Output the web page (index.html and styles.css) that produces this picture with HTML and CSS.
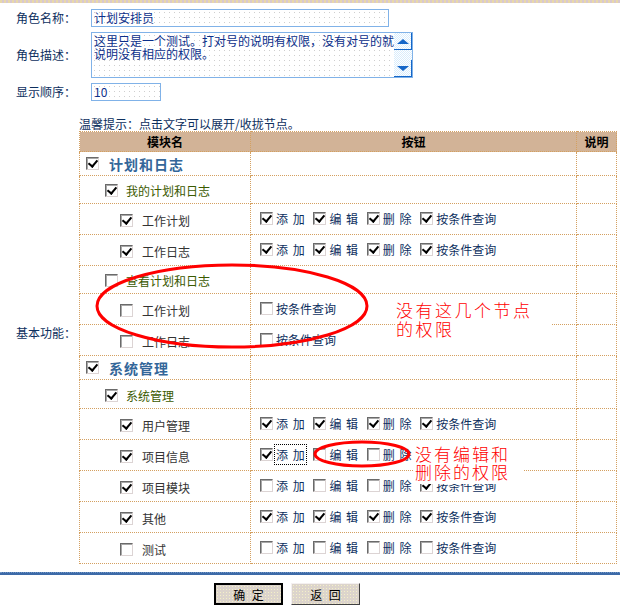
FILE: index.html
```html
<!DOCTYPE html>
<html lang="zh-CN">
  <head>
    <meta charset="UTF-8" />
    <title>角色权限设置</title>
    <link rel="stylesheet" href="styles.css">
  </head>
  <body>
    <div class="page">
      <div class="top-band"></div>

      <div class="form">
        <div class="label">角色名称：</div>
        <div class="field"><div class="input name">计划安排员</div></div>

        <div class="label">角色描述：</div>
        <div class="field">
          <div class="textarea">
            <div class="ta-text">这里只是一个测试。打对号的说明有权限，没有对号的就<br>说明没有相应的权限。</div>
            <div class="scrollbar">
              <span class="sb-btn"><i class="arrow up"></i></span>
              <span class="sb-track"></span>
              <span class="sb-btn"><i class="arrow down"></i></span>
            </div>
          </div>
        </div>

        <div class="label">显示顺序：</div>
        <div class="field"><div class="input order">10</div></div>

        <div class="label label-perm">基本功能：</div>
        <div class="perm">
          <div class="hint">温馨提示：点击文字可以展开/收拢节点。</div>
          <table class="tree">
            <tr class="head">
              <th class="c1">模块名</th>
              <th class="c2">按钮</th>
              <th class="c3">说明</th>
            </tr>

            <tr class="lv1">
              <td><span class="cb on"></span><span class="t1">计划和日志</span></td>
              <td></td><td></td>
            </tr>
            <tr class="lv2">
              <td><span class="cb on"></span><span class="t2">我的计划和日志</span></td>
              <td></td><td></td>
            </tr>
            <tr class="lv3">
              <td><span class="cb on"></span><span class="t3">工作计划</span></td>
              <td>
                <span class="opt"><span class="cb on"></span>添 加</span>
                <span class="opt"><span class="cb on"></span>编 辑</span>
                <span class="opt"><span class="cb on"></span>删 除</span>
                <span class="opt"><span class="cb on"></span>按条件查询</span>
              </td>
              <td></td>
            </tr>
            <tr class="lv3">
              <td><span class="cb on"></span><span class="t3">工作日志</span></td>
              <td>
                <span class="opt"><span class="cb on"></span>添 加</span>
                <span class="opt"><span class="cb on"></span>编 辑</span>
                <span class="opt"><span class="cb on"></span>删 除</span>
                <span class="opt"><span class="cb on"></span>按条件查询</span>
              </td>
              <td></td>
            </tr>
            <tr class="lv2">
              <td><span class="cb"></span><span class="t2">查看计划和日志</span></td>
              <td></td><td></td>
            </tr>
            <tr class="lv3">
              <td><span class="cb"></span><span class="t3">工作计划</span></td>
              <td><span class="opt"><span class="cb"></span>按条件查询</span></td>
              <td></td>
            </tr>
            <tr class="lv3">
              <td><span class="cb"></span><span class="t3">工作日志</span></td>
              <td><span class="opt"><span class="cb"></span>按条件查询</span></td>
              <td></td>
            </tr>

            <tr class="lv1">
              <td><span class="cb on"></span><span class="t1">系统管理</span></td>
              <td></td><td></td>
            </tr>
            <tr class="lv2 tall">
              <td><span class="cb on"></span><span class="t2">系统管理</span></td>
              <td></td><td></td>
            </tr>
            <tr class="lv3">
              <td><span class="cb on"></span><span class="t3">用户管理</span></td>
              <td>
                <span class="opt"><span class="cb on"></span>添 加</span>
                <span class="opt"><span class="cb on"></span>编 辑</span>
                <span class="opt"><span class="cb on"></span>删 除</span>
                <span class="opt"><span class="cb on"></span>按条件查询</span>
              </td>
              <td></td>
            </tr>
            <tr class="lv3">
              <td><span class="cb on"></span><span class="t3">项目信息</span></td>
              <td>
                <span class="opt"><span class="cb on"></span><span class="focus">添 加</span></span>
                <span class="opt"><span class="cb"></span>编 辑</span>
                <span class="opt"><span class="cb"></span>删 除</span>
                <span class="opt covered"><span class="cb on"></span>按条件查询</span>
              </td>
              <td></td>
            </tr>
            <tr class="lv3">
              <td><span class="cb on"></span><span class="t3">项目模块</span></td>
              <td>
                <span class="opt"><span class="cb"></span>添 加</span>
                <span class="opt"><span class="cb"></span>编 辑</span>
                <span class="opt"><span class="cb"></span>删 除</span>
                <span class="opt"><span class="cb on"></span>按条件查询</span>
              </td>
              <td></td>
            </tr>
            <tr class="lv3">
              <td><span class="cb on"></span><span class="t3">其他</span></td>
              <td>
                <span class="opt"><span class="cb on"></span>添 加</span>
                <span class="opt"><span class="cb on"></span>编 辑</span>
                <span class="opt"><span class="cb on"></span>删 除</span>
                <span class="opt"><span class="cb on"></span>按条件查询</span>
              </td>
              <td></td>
            </tr>
            <tr class="lv3">
              <td><span class="cb"></span><span class="t3">测试</span></td>
              <td>
                <span class="opt"><span class="cb"></span>添 加</span>
                <span class="opt"><span class="cb"></span>编 辑</span>
                <span class="opt"><span class="cb"></span>删 除</span>
                <span class="opt"><span class="cb"></span>按条件查询</span>
              </td>
              <td></td>
            </tr>
          </table>
        </div>
      </div>

      <div class="bottom-line"></div>
      <div class="buttons">
        <button class="btn default">确 定</button>
        <button class="btn">返 回</button>
      </div>

      <!-- red notes drawn over the screenshot -->
      <svg class="marks" width="620" height="612" viewBox="0 0 620 612">
        <ellipse cx="232" cy="306" rx="135" ry="41" fill="none" stroke="#f00" stroke-width="3" />
        <ellipse cx="362" cy="454" rx="47" ry="12" fill="none" stroke="#f00" stroke-width="3" />
      </svg>
      <div class="note note-1">没有这几个节点<br>的权限</div>
      <div class="note note-2">没有编辑和<br>删除的权限</div>
    </div>
  </body>
</html>
```

FILE: styles.css
```css
* {
  margin: 0;
  padding: 0;
  box-sizing: border-box;
}

body {
  background: #fff;
  font-family: "Noto Sans CJK SC", "DejaVu Sans", sans-serif;
  font-size: 12px;
  color: #0d2f5e;
}

.page {
  position: relative;
  width: 620px;
  height: 612px;
  overflow: hidden;
}

.top-band {
  height: 3px;
  background: repeating-linear-gradient(90deg, #e8d8a8 0 2px, #d8c8d0 2px 4px);
}

.form {
  display: grid;
  grid-template-columns: 79px 1fr;
  row-gap: 5px;
  padding-top: 6px;
}

.label {
  align-self: center;
  text-align: right;
  padding-right: 3px;
  line-height: 14px;
}

.label-perm {
  padding-bottom: 4px;
}

.field {
  padding-left: 12px;
}

.input,
.textarea {
  border: 1px solid #80b2e8;
  background-color: #fff;
  background-image: radial-gradient(circle, #cfcfcf 0.6px, transparent 0.8px);
  background-size: 5px 5px;
  color: #0b2f8a;
  line-height: 16px;
  padding-left: 2px;
}

.name {
  width: 298px;
  height: 18px;
}

.order {
  width: 70px;
  height: 18px;
}

.textarea {
  display: flex;
  width: 322px;
  height: 46px;
  padding-left: 0;
}

.ta-text {
  flex: 1;
  padding: 1px 0 0 2px;
  line-height: 13px;
  white-space: nowrap;
}

.scrollbar {
  width: 18px;
  display: flex;
  flex-direction: column;
  background: repeating-conic-gradient(#d8ecfc 0 25%, #fff 0 50%) 0 0 / 2px 2px;
}

.sb-btn {
  height: 17px;
  display: flex;
  align-items: center;
  justify-content: center;
  border-right: 1px solid #1466c8;
  border-bottom: 1px solid #1466c8;
}

.sb-track {
  flex: 1;
}

.arrow {
  width: 0;
  height: 0;
  border-left: 6px solid transparent;
  border-right: 6px solid transparent;
}

.arrow.up {
  border-bottom: 5px solid #1466c8;
}

.arrow.down {
  border-top: 5px solid #1466c8;
}

.perm {
  padding-top: 11px;
}

.hint {
  line-height: 14px;
  height: 14px;
  color: #0d2f5e;
}

.tree {
  width: 537px;
  border-collapse: collapse;
  border: 1px dotted #c8a070;
  table-layout: fixed;
}

.tree td,
.tree th {
  border: 1px dotted #d4a060;
  padding: 0;
  white-space: nowrap;
}

.head th {
  height: 20px;
  font-size: 12px;
  font-weight: bold;
  color: #000;
  background: repeating-conic-gradient(#c09a7a 0 25%, #e4ccb4 0 50%) 0 0 / 2px 2px;
}

.c1 { width: 171px; }
.c2 { width: 326px; }
.c3 { width: 40px; }

.lv1 td { height: 24px; }
.lv2 td { height: 28px; }
.lv2.tall td { height: 29px; }
.lv3 td { height: 31px; }

.lv1 td:first-child { padding-left: 6px; }
.lv2 td:first-child { padding-left: 25px; }
.lv3 td:first-child { padding-left: 40px; }

.tree td:nth-child(2) {
  padding-left: 9px;
  color: #0d2f5e;
}

.cb {
  position: relative;
  display: inline-block;
  width: 13px;
  height: 13px;
  border: 1px solid;
  border-color: #6a6a6a #dcd4d4 #dcd4d4 #6a6a6a;
  box-shadow: inset 1px 1px #a8a8a8;
  background: #fff;
  vertical-align: middle;
}

.cb.on::after {
  content: "";
  position: absolute;
  left: 3px;
  top: 0;
  width: 4px;
  height: 7px;
  border: solid #000;
  border-width: 0 2px 2px 0;
  transform: rotate(40deg);
}

.t1 {
  margin-left: 10px;
  font-size: 14px;
  font-weight: bold;
  letter-spacing: 1px;
  color: #336699;
  vertical-align: middle;
}

.t2 {
  margin-left: 8px;
  color: #3b5a00;
  vertical-align: middle;
}

.t3 {
  margin-left: 9px;
  color: #333;
  vertical-align: middle;
}

.opt {
  display: inline-flex;
  align-items: center;
  gap: 3px;
  margin-right: 6px;
  word-spacing: 2px;
}

/* hidden under the red note in the screenshot */
.opt.covered {
  visibility: hidden;
}

.focus {
  outline: 1px dotted #000;
  outline-offset: 1px;
}

.bottom-line {
  margin-top: 8px;
  height: 3px;
  background: #3d6aa8;
  border-top: 1px dotted #6f94c4;
}

.buttons {
  padding: 8px 0 0 214px;
  display: flex;
  gap: 8px;
}

.btn {
  width: 69px;
  height: 22px;
  font-family: "Noto Sans CJK SC", sans-serif;
  font-size: 12px;
  color: #000;
  word-spacing: 4px;
  background-color: #dcd4cc;
  background-image: radial-gradient(circle, #f4f0c8 0.7px, transparent 0.9px);
  background-size: 3px 3px;
  border: 1px solid;
  border-color: #f4f0f0 #404040 #404040 #f4f0f0;
}

.btn.default {
  border: 2px solid #000;
}

.marks {
  position: absolute;
  left: 0;
  top: 0;
  pointer-events: none;
}

.note {
  position: absolute;
  background: #fff;
  color: #f00;
  font-weight: 300;
}

.note-1 {
  left: 396px;
  top: 298px;
  width: 155px;
  height: 42px;
  font-size: 17px;
  line-height: 19px;
  letter-spacing: 2.5px;
  padding-top: 2px;
}

.note-2 {
  left: 414px;
  top: 443px;
  width: 110px;
  height: 41px;
  font-size: 17px;
  line-height: 18px;
  letter-spacing: 2px;
  padding: 2px 0 0 1px;
}
```
